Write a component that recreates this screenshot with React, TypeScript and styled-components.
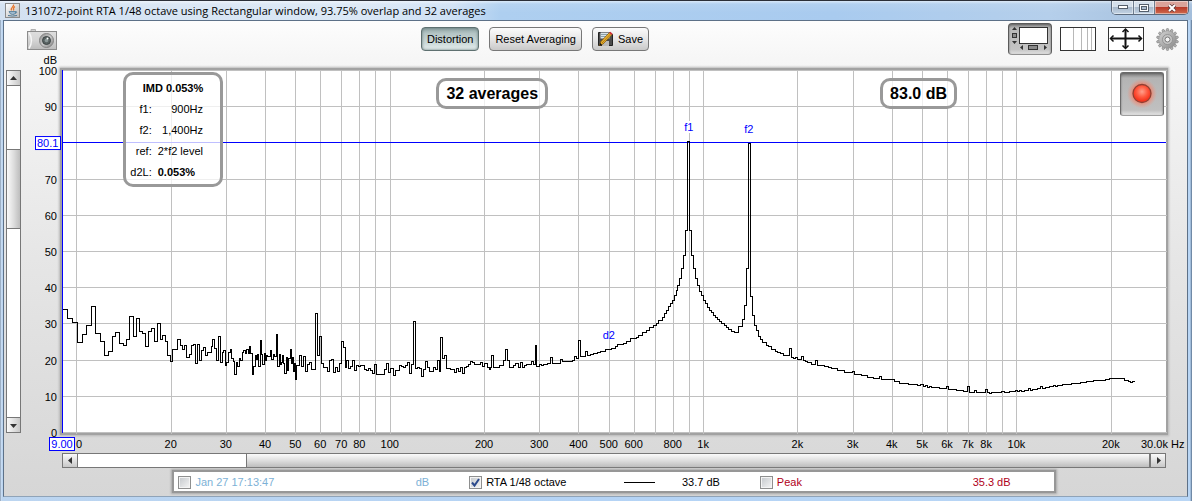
import React from "react";
import styled, { createGlobalStyle, css } from "styled-components";

const GlobalStyle = createGlobalStyle`
  *, *::before, *::after { box-sizing: border-box; }
  body { margin: 0; background: #bcd3ec; }
  button { font: inherit; color: inherit; padding: 0; margin: 0; cursor: pointer; }
`;

const uiFont = `"Liberation Sans", Arial, sans-serif`;

/* ---------- data ---------- */

const F_MIN = 9;
const F_MAX = 30000;
const xPct = (f: number) => `${(Math.log10(f / F_MIN) / Math.log10(F_MAX / F_MIN)) * 100}%`;
const yPct = (db: number) => `${((100 - db) / 100) * (362 / 363) * 100}%`;

const gridFrequencies = [
  10, 20, 30, 40, 50, 60, 70, 80, 90, 100, 200, 300, 400, 500, 600, 700, 800, 900,
  1000, 2000, 3000, 4000, 5000, 6000, 7000, 8000, 9000, 10000, 20000,
];
const unlabelled = new Set([10, 90, 700, 900, 9000]);
const levels = [100, 90, 80, 70, 60, 50, 40, 30, 20, 10, 0];
const formatHz = (f: number) => (f >= 1000 ? `${f / 1000}k` : `${f}`);

/* Spectrum steps: "start,level" pairs; each level holds until the next start. */
const spectrum = `
63,309 67,318 72,322 77,342 82,334 86,325 91,306 95,333 100,341 104,355 108,351 112,336 115,332
119,343 123,345 126,339 129,316 133,336 136,318 139,331 142,333 145,346 148,331 151,328 154,341
157,323 160,339 162,335 165,341 167,355 170,361 172,349 177,339 180,345 182,349 184,345 186,357
189,354 191,345 193,344 195,363 197,344 199,360 201,350 203,347 205,355 207,352 211,346 212,339
214,348 216,360 218,336 220,362 222,352 223,350 225,365 226,362 228,352 230,349 231,358 233,361
234,374 236,362 237,366 239,358 240,360 242,352 243,350 245,353 246,349 248,353 249,346 250,353
252,374 253,366 255,355 256,359 257,354 258,366 260,340 261,354 262,364 264,353 265,360 266,355
267,356 270,350 271,359 273,354 274,356 276,334 277,366 279,354 280,364 281,362 282,355 283,363
284,373 286,357 287,370 288,358 290,349 291,363 292,357 293,371 294,363 295,379 296,365 299,355
301,366 303,356 305,371 307,364 309,362 311,369 315,313 317,355 319,336 321,363 323,367 327,371
329,360 331,359 333,372 335,367 337,371 339,363 341,341 343,347 345,367 346,360 348,368 350,366
352,360 354,370 356,365 358,366 360,365 364,369 366,370 368,368 370,370 372,373 374,364 376,374
384,369 386,363 388,372 390,368 393,375 395,370 399,365 401,366 403,367 405,365 407,362 409,373
411,364 413,321 415,368 417,367 419,368 421,376 423,369 425,361 427,367 429,371 433,367 435,369
437,360 439,371 440,337 442,358 444,355 446,368 450,369 454,372 456,368 458,371 460,367 462,373
464,367 466,366 468,364 470,361 472,362 474,364 480,362 482,366 484,363 487,367 489,369 490,367
491,355 493,367 499,365 503,360 505,349 507,360 509,367 513,365 515,363 518,367 520,362 522,367
524,365 526,364 531,361 533,364 535,345 536,366 539,364 541,365 543,364 547,363 550,357 552,363
560,359 562,361 572,360 574,356 576,358 578,340 580,356 585,351 587,355 590,354 593,353 597,352
600,351 605,349 611,348 615,346 617,344 623,343 626,341 630,338 636,337 638,335 642,332 646,330
649,327 653,325 656,323 658,320 662,317 664,313 666,310 668,306 670,303 672,300 674,295 676,290
677,285 679,278 681,268 683,255 685,230 687,141 689,230 691,255 693,268 695,278 697,285 699,291
701,295 703,300 705,303 707,307 709,310 711,312 713,315 715,317 717,319 719,321 721,323 724,325
726,327 728,329 731,331 734,332 738,326 742,319 744,305 746,268 748,143 750,296 752,315 754,325
756,330 758,336 760,339 762,342 766,345 768,346 771,349 775,351 777,352 780,353 783,355 789,348
791,357 793,358 795,357 797,359 801,356 803,360 805,361 807,362 811,364 815,360 817,365 824,366
828,367 831,368 837,370 844,372 852,371 854,374 861,375 867,377 873,378 879,376 881,379 890,379
892,379 894,381 899,383 908,384 917,385 920,384 923,386 925,385 927,387 929,386 931,387 939,388
946,386 948,389 956,390 963,391 967,386 969,392 974,390 976,392 985,389 987,392 989,393 991,392
1001,391 1004,392 1009,391 1015,390 1017,391 1019,390 1021,391 1024,390 1028,388 1030,390
1032,389 1037,388 1040,386 1042,388 1045,387 1049,386 1053,385 1055,386 1057,385 1062,384 1071,383
1080,382 1086,381 1093,380 1105,379 1109,378 1112,378 1124,380 1128,381 1130,382 1132,381`;

const steps = spectrum.trim().split(/\s+/).map((p) => p.split(",").map(Number));
const tracePath =
  steps.map(([x, y], i) => (i === 0 ? `M${x} ${y + 0.5}` : `H${x + 0.5}V${y + 0.5}`)).join("") + "H1135";

/* ---------- window ---------- */

const Window = styled.div`
  min-height: 100vh;
  display: flex;
  flex-direction: column;
  padding: 0 4px 4px 3px;
  background: linear-gradient(90deg, #6f8299 0, #cfe0f3 1px, #bcd5f0 2px, #b4d3f5 50%, #b9d6f5 calc(100% - 2px), #58708c 100%);
  font: 11px/13px ${uiFont};
  color: #000;
`;

const TitleBar = styled.header`
  height: 20px;
  margin: 0 -4px 0 -3px;
  padding-left: 5px;
  display: flex;
  align-items: center;
  gap: 5px;
  border-top: 1px solid #2b2f38;
  background:
    linear-gradient(180deg, rgba(255, 255, 255, 0.55) 0, rgba(255, 255, 255, 0.1) 3px, transparent 60%),
    linear-gradient(90deg, #d3e1f1 0, #dbe8f6 30%, #cfe1f5 38%, #aecff0 42%, #a9cbef 70%, #b5cfeb 88%, #a4bedb 100%);
`;

const Title = styled.h1`
  margin: 0;
  flex: 1;
  font: 11px/18px "Open Sans", "Noto Sans", sans-serif;
  white-space: nowrap;
`;

const WindowButtons = styled.div`
  align-self: flex-start;
  display: flex;
  height: 14px;
  margin-right: 3px;
  border: 1px solid #5c6a7c;
  border-top: 0;
  border-radius: 0 0 5px 5px;
  overflow: hidden;
`;

const WindowButton = styled.button<{ $close?: boolean }>`
  display: grid;
  place-items: center;
  width: ${(p) => (p.$close ? 34 : 21)}px;
  border: 0;
  border-left: ${(p) => (p.$close ? "1px solid #5c6a7c" : "0")};
  box-shadow: inset 0 0 0 1px rgba(255, 255, 255, 0.45);
  background: ${(p) =>
    p.$close
      ? "linear-gradient(#dba39a 0 45%, #b93b2a 50%, #cf6a4d)"
      : "linear-gradient(#d5e0ec 0 45%, #a9bacd 50%, #c3d3e4)"};
  & + & { border-left: 1px solid #6d7c8f; }
`;

const Client = styled.main`
  flex: 1;
  display: flex;
  flex-direction: column;
  border: 1px solid #5d7188;
  border-bottom-color: #8fa3b8;
  background: linear-gradient(#fdfdfd 0, #f6f6f6 8%, #e6e6e6 50%, #d6d6d6 100%);
`;

/* ---------- toolbar ---------- */

const Toolbar = styled.div`
  height: 36px;
  padding: 0 8px 0 23px;
  display: grid;
  grid-template-columns: 1fr auto 1fr;
  align-items: center;
`;

const ButtonRow = styled.div`
  display: flex;
  gap: 10px;
  margin-right: 136px;
`;

const ToolButton = styled.button<{ $pressed?: boolean }>`
  height: 24px;
  padding: 0 5px;
  display: flex;
  align-items: center;
  gap: 5px;
  border: 1px solid #777;
  border-radius: 4px;
  line-height: 15px;
  white-space: nowrap;
  background: linear-gradient(#fbfbfb, #e6e6e6 50%, #c9c9c9);
  ${(p) =>
    p.$pressed &&
    css`
      border-color: #5e7070;
      background: linear-gradient(#8fa3a3, #b4c5c5 25%, #ccdada 70%, #e6eeee);
      box-shadow: inset 0 0 3px #5f7474;
    `}
`;

const PlainButton = styled.button`
  display: block;
  justify-self: start;
  border: 0;
  background: none;
  line-height: 0;
`;

const ViewTools = styled.div`
  display: flex;
  align-items: center;
  justify-content: flex-end;
  gap: 12px;
`;

const LayoutToggle = styled.button`
  width: 44px;
  height: 32px;
  margin-right: -4px;
  border: 1px solid #5a5a5a;
  border-bottom-color: #909090;
  border-radius: 4px;
  line-height: 0;
  background: linear-gradient(#8c8c8c, #b8b8b8 15%, #c4c4c4 85%, #e0e0e0);
  box-shadow: inset 0 1px 2px #666;
`;

/* ---------- chart area ---------- */

const ChartGrid = styled.section`
  flex: 1;
  display: grid;
  grid-template-columns: 15px 41px minmax(0, 1fr) 21px;
  grid-template-rows: 13px minmax(200px, 1fr) 20px 15px;
  padding-left: 2px;
`;

const AxisUnit = styled.div`
  grid-area: 1 / 2;
  padding-right: 5px;
  margin-top: -3px;
  text-align: right;
`;

const AxisSvg = styled.svg<{ $area: string }>`
  grid-area: ${(p) => p.$area};
  display: block;
  width: 100%;
  height: 100%;
  overflow: visible;
  z-index: 1;
  font: 11px ${uiFont};
`;

const Plot = styled.div`
  grid-area: 2 / 3;
  position: relative;
  background: #fff;
  box-shadow: 0 0 0 2px #a2a2a2, 0 0 2px 3px #b8b8b8;
`;

const PlotSvg = styled.svg`
  position: absolute;
  inset: 0;
  width: 100%;
  height: 100%;
  overflow: visible;
  font: 11px ${uiFont};
`;

const overlay = css`
  position: absolute;
  border: 3px solid #999;
  border-radius: 10px;
  background: rgba(255, 255, 255, 0.75);
`;

const Readout = styled.output<{ $left: string; $width: number }>`
  ${overlay}
  top: 8px;
  left: ${(p) => p.$left};
  width: ${(p) => p.$width}px;
  height: 31px;
  text-align: center;
  font: bold 16px/26px ${uiFont};
  white-space: nowrap;
`;

const DistortionPanel = styled.div`
  ${overlay}
  top: 2px;
  left: 61px;
  width: 100px;
  height: 115px;
  padding: 3px 0;
`;

const DistortionTable = styled.table`
  width: 100%;
  border-collapse: collapse;
  caption { font-weight: bold; line-height: 21px; }
  th { width: 26px; padding: 0; font-weight: normal; text-align: right; }
  td { padding: 0 17px 0 6px; text-align: right; white-space: nowrap; }
  tr { height: 21px; }
  tr:last-child td { text-align: left; font-weight: bold; padding-right: 0; }
`;

const RecordButton = styled.button`
  position: absolute;
  top: 2px;
  right: 2px;
  width: 44px;
  height: 44px;
  border: 1px solid #6a6a6a;
  border-bottom-color: #a0a0a0;
  border-radius: 3px;
  line-height: 0;
  background: linear-gradient(#7c7c7c, #b4b4b4 12%, #c0c0c0 88%, #e4e4e4);
  box-shadow: inset 0 1px 2px #666;
`;

const ScrollTrack = styled.div<{ $vertical?: boolean }>`
  grid-area: ${(p) => (p.$vertical ? "2 / 1" : "4 / 3")};
  display: flex;
  flex-direction: ${(p) => (p.$vertical ? "column" : "row")};
  border: 1px solid #777;
  background: #fff;
`;

const ScrollArrow = styled.button<{ $side: "top" | "right" | "bottom" | "left" }>`
  flex: 0 0 15px;
  display: grid;
  place-items: center;
  border: 0 solid #777;
  border-${(p) => p.$side}-width: 1px;
  background: linear-gradient(${(p) => (p.$side === "left" || p.$side === "right" ? "180deg" : "90deg")}, #fafafa, #c8c8c8);
`;

const ScrollGap = styled.div<{ $grow: number }>`
  flex: ${(p) => p.$grow} 1 0;
`;

const ScrollThumb = styled.div<{ $grow: number; $vertical?: boolean }>`
  flex: ${(p) => p.$grow} 1 0;
  border: 0 solid #777;
  border-width: ${(p) => (p.$vertical ? "1px 0" : "0 1px")};
  background: linear-gradient(${(p) => (p.$vertical ? "90deg" : "180deg")}, #fafafa, #dedede 50%, #bdbdbd);
`;

/* ---------- legend ---------- */

const LegendBar = styled.div`
  display: flex;
  justify-content: center;
  padding: 2px 21px 3px 58px;
`;

const Legend = styled.div`
  width: 80%;
  height: 23px;
  padding: 1px 3px 0 4px;
  display: grid;
  grid-template-columns: repeat(3, 1fr);
  align-items: center;
  border: 2px solid #979797;
  box-shadow: 0 0 2px 1px #a8a8a8;
  background: #fff;
`;

const LegendItem = styled.div<{ $color: string }>`
  display: flex;
  align-items: center;
  padding-right: 40px;
  color: ${(p) => p.$color};
`;

const LegendLabel = styled.label`
  flex: 1;
  display: flex;
  align-items: center;
  gap: 4px;
  white-space: nowrap;
`;

const CheckWrap = styled.span`
  position: relative;
  display: block;
  width: 13px;
  height: 13px;
`;

const Check = styled.input`
  appearance: none;
  display: block;
  width: 13px;
  height: 13px;
  margin: 0;
  border: 1px solid #8e8f8f;
  background: linear-gradient(135deg, #c3c7cb, #f6f6f6);
  box-shadow: inset 0 0 0 1px #f4f4f4;
`;

const CheckMark = styled.svg`
  position: absolute;
  inset: 0;
  pointer-events: none;
`;

const Swatch = styled.span`
  width: 31px;
  height: 1px;
  margin-right: 27px;
  background: #000;
`;

/* ---------- icons ---------- */

const JavaIcon = () => (
  <svg width="15" height="15" viewBox="0 0 15 15" aria-hidden="true">
    <defs>
      <linearGradient id="java" x1="0" y1="0" x2="1" y2="1">
        <stop offset="0" stopColor="#fff" />
        <stop offset="1" stopColor="#b9b9b9" />
      </linearGradient>
    </defs>
    <rect x=".5" y=".5" width="14" height="14" fill="url(#java)" stroke="#8b8b8b" />
    <path d="M8.5 1.5C9.500 3.500 5 4.500 6.500 7.500M10 3.500C8 4.500 8 5.500 8.700 7.500" fill="none" stroke="#e8762c" strokeWidth="1.300" />
    <path d="M4 8.500h6.500v1.500q-.5 1.500-3 1.500T4 8.500M10.500 8.500q2.500 0 0 2.200" fill="#9fb9cd" stroke="#4d7896" strokeWidth=".8" />
    <path d="M3 12.500q4.500 1.200 9 0" fill="none" stroke="#4d7896" />
  </svg>
);

const CameraIcon = () => (
  <svg width="30" height="21" viewBox="0 0 30 21" aria-hidden="true">
    <defs>
      <linearGradient id="cam" x1="0" y1="0" x2="0" y2="1">
        <stop offset="0" stopColor="#dedede" />
        <stop offset=".5" stopColor="#d4d4d4" />
        <stop offset="1" stopColor="#bcbcbc" />
      </linearGradient>
      <linearGradient id="ring" x1="0" y1="0" x2="1" y2="1">
        <stop offset="0" stopColor="#8c8c8c" />
        <stop offset=".5" stopColor="#c9c9c9" />
        <stop offset="1" stopColor="#7f7f7f" />
      </linearGradient>
    </defs>
    <path d="M4 2.500v-2h4.500v2" fill="#d0d0d0" stroke="#b0b0b0" />
    <rect x=".5" y="2.500" width="29" height="18" fill="url(#cam)" stroke="#8c8c8c" />
    <path d="M2 3.500q5 8 0 16" fill="none" stroke="#f6f6f6" strokeWidth="1.500" />
    <circle cx="19.500" cy="11.500" r="7" fill="url(#ring)" stroke="#858585" />
    <circle cx="19.500" cy="11.500" r="4" fill="#5a6464" stroke="#3d4545" />
    <circle cx="19.500" cy="11.500" r="1.800" fill="#8d9999" />
    <circle cx="20.500" cy="9.500" r="1" fill="#fff" />
  </svg>
);

const SaveIcon = () => (
  <svg width="15" height="16" viewBox="0 0 15 16" aria-hidden="true">
    <path d="M.5 1.500h12l2 2v11H.5z" fill="#4b4b4b" stroke="#222" />
    <rect x="2.500" y="1.500" width="9" height="6" fill="#d9e4ea" />
    <path d="M3 3.500h8M3 5.500h8" stroke="#8aa0aa" />
    <rect x="4" y="10" width="7" height="5" fill="#b9b9b9" />
    <path d="M1.500 14.500 3 10.500 11.500 1.500 14 3.500 5 13z" fill="#f2b92d" stroke="#7c5310" strokeWidth=".8" />
    <path d="M4 12 12.500 3" stroke="#9b6a15" strokeWidth=".8" />
    <path d="M11 2 12.300.7 14.700 2.700 13.500 4z" fill="#d3343c" />
    <path d="M1.500 14.500 2.500 12 4 13.500z" fill="#111" />
  </svg>
);

const LayoutIcon = () => (
  <svg width="42" height="30" viewBox="0 0 42 30" aria-hidden="true">
    <rect x="10.500" y="3.500" width="28" height="16" fill="#fff" stroke="#333" />
    <path d="M3 6l2.500-3L8 6zM3 17h5l-2.500 3zM14 21v5l-3-2.500zM35 21v5l3-2.500z" fill="#333" />
    <rect x="3.500" y="9.500" width="4" height="4" fill="#8a8a8a" stroke="#333" />
    <rect x="19.500" y="21.500" width="9" height="4" fill="#8a8a8a" stroke="#333" />
  </svg>
);

const GridIcon = () => (
  <svg width="36" height="24" viewBox="0 0 36 24" aria-hidden="true">
    <rect x=".5" y=".5" width="35" height="23" fill="#fff" stroke="#333" />
    <path d="M13.500 1v22M21.500 1v22M27.500 1v22M31.500 1v22" stroke="#b8b8b8" />
  </svg>
);

const FitIcon = () => (
  <svg width="36" height="24" viewBox="0 0 36 24" aria-hidden="true">
    <rect x=".5" y=".5" width="35" height="23" fill="#fff" stroke="#333" />
    <path d="M3 11.500h30M17.500 3v18" stroke="#111" strokeWidth="2" />
    <path d="M5.500 8.500 2.500 11.500l3 3M30.500 8.500l3 3-3 3M14.500 5 17.500 2l3 3M14.500 18.500l3 3 3-3" fill="none" stroke="#111" strokeWidth="1.500" />
  </svg>
);

const GearIcon = () => (
  <svg width="23" height="23" viewBox="-11.500 -11.500 23 23" aria-hidden="true">
    <defs>
      <linearGradient id="gear" x1="0" y1="0" x2="1" y2="1">
        <stop offset="0" stopColor="#d2d2d2" />
        <stop offset="1" stopColor="#8a8a8a" />
      </linearGradient>
    </defs>
    {Array.from({ length: 14 }, (_, i) => (
      <rect key={i} x="-1.200" y="-11" width="2.400" height="5" rx="1" fill="#b4b4b4" stroke="#7c7c7c" strokeWidth=".6" transform={`rotate(${(i * 360) / 14})`} />
    ))}
    <circle r="8.800" fill="url(#gear)" stroke="#909090" strokeWidth=".6" />
    <circle r="5" fill="#c6c6c6" stroke="#8c8c8c" strokeWidth=".8" />
    <circle r="2.500" fill="#f4f4f4" stroke="#777" />
  </svg>
);

const RecordIcon = () => (
  <svg width="42" height="42" viewBox="0 0 42 42" aria-hidden="true">
    <defs>
      <radialGradient id="glow">
        <stop offset=".5" stopColor="#ff6a4a" stopOpacity=".8" />
        <stop offset="1" stopColor="#ff8a70" stopOpacity="0" />
      </radialGradient>
      <radialGradient id="led" cx=".5" cy=".4">
        <stop offset="0" stopColor="#ffa08c" />
        <stop offset=".6" stopColor="#ff5a40" />
        <stop offset="1" stopColor="#f5361e" />
      </radialGradient>
    </defs>
    <circle cx="21" cy="20.500" r="15" fill="url(#glow)" />
    <circle cx="21" cy="20.500" r="9" fill="url(#led)" stroke="#8f4034" strokeWidth="1.300" />
  </svg>
);

const arrows = {
  top: "M0 5 3.500 1 7 5z",
  bottom: "M0 2h7L3.500 6z",
  left: "M5 0v7L1 3.500z",
  right: "M2 0v7l4-3.500z",
};
const Arrow = ({ to }: { to: keyof typeof arrows }) => (
  <svg width="7" height="7" viewBox="0 0 7 7" aria-hidden="true">
    <path d={arrows[to]} fill="#333" />
  </svg>
);

/* ---------- pieces ---------- */

const LevelAxis = () => (
  <AxisSvg $area="2 / 2">
    {levels.filter((db) => db !== 80).map((db) => (
      <text key={db} x="100%" dx="-5" y={yPct(db)} dy="5" textAnchor="end">{db}</text>
    ))}
    <svg x="0" y={yPct(80.1)} overflow="visible">
      <rect x="14.500" y="-5.500" width="25" height="13" fill="#fff" stroke="#00f" />
      <text x="15" dx="1" y="5" fill="#00f">80.1</text>
    </svg>
  </AxisSvg>
);

/* The start-of-range box covers the first digit of the 10 Hz label, so only its zero is drawn. */
const FrequencyAxis = () => (
  <AxisSvg $area="3 / 3">
    {gridFrequencies.filter((f) => !unlabelled.has(f)).map((f) => (
      <text key={f} x={xPct(f)} y="15" textAnchor="middle">{formatHz(f)}</text>
    ))}
    <text x="14" y="15">0</text>
    <text x="100%" dx="-25" y="15">30.0k Hz</text>
    <rect x="-12.500" y="4.500" width="25" height="13" fill="#fff" stroke="#00f" />
    <text x="0" y="15" textAnchor="middle" fill="#00f">9.00</text>
  </AxisSvg>
);

const PlotDrawing = () => (
  <PlotSvg role="img" aria-label="Spectrum">
    <g stroke="#c0c0c0" shapeRendering="crispEdges" transform="translate(0.5 0.5)">
      {gridFrequencies.map((f) => (
        <line key={f} x1={xPct(f)} x2={xPct(f)} y1="0" y2="100%" />
      ))}
      {levels.map((db) => (
        <line key={db} x1="0" x2="100%" y1={yPct(db)} y2={yPct(db)} />
      ))}
    </g>
    <svg viewBox="62 70 1104 363" preserveAspectRatio="none" width="100%" height="100%">
      <path d="M62 142.500H1166" stroke="#00f" vectorEffect="non-scaling-stroke" shapeRendering="crispEdges" />
      <path d={tracePath} fill="none" stroke="#000" vectorEffect="non-scaling-stroke" shapeRendering="crispEdges" />
    </svg>
    <rect x="0" y="0" width="1" height="100%" fill="#00f" />
    <svg x={xPct(900)} y="51" overflow="visible">
      <rect x="-5" y="0" width="11" height="12" fill="#fff" />
    </svg>
    <g fill="#00f" textAnchor="middle">
      <text x={xPct(900)} y="61">f1</text>
      <text x={xPct(1400)} y="63">f2</text>
      <text x={xPct(500)} y="269">d2</text>
    </g>
  </PlotSvg>
);

type LegendEntryProps = { id: string; name: string; value: string; color: string; checked?: boolean; swatch?: boolean };

const LegendEntry = ({ id, name, value, color, checked, swatch }: LegendEntryProps) => (
  <LegendItem $color={color}>
    <LegendLabel htmlFor={id}>
      <CheckWrap>
        <Check type="checkbox" id={id} defaultChecked={checked} />
        {checked && (
          <CheckMark width="13" height="13" viewBox="0 0 13 13" aria-hidden="true">
            <path d="M3 6.500 5.500 9.500 10 3" fill="none" stroke="#2c4a8c" strokeWidth="2" />
          </CheckMark>
        )}
      </CheckWrap>
      {name}
    </LegendLabel>
    {swatch && <Swatch />}
    <span>{value}</span>
  </LegendItem>
);

export default function App() {
  return (
    <Window>
      <GlobalStyle />
      <TitleBar>
        <JavaIcon />
        <Title>131072-point RTA 1/48 octave using Rectangular window, 93.75% overlap and 32 averages</Title>
        <WindowButtons>
          <WindowButton aria-label="Minimize">
            <svg width="10" height="5" viewBox="0 0 10 5"><rect x=".5" y=".5" width="9" height="3" fill="#fff" stroke="#555f6c" /></svg>
          </WindowButton>
          <WindowButton aria-label="Maximize">
            <svg width="10" height="8" viewBox="0 0 10 8"><rect x="1.500" y="1.500" width="7" height="5" fill="none" stroke="#555f6c" strokeWidth="3" /><rect x="1.500" y="1.500" width="7" height="5" fill="none" stroke="#fff" /></svg>
          </WindowButton>
          <WindowButton aria-label="Close" $close>
            <svg width="10" height="8" viewBox="0 0 10 8"><path d="M2 1l6 6M8 1 2 7" stroke="#5d3a3a" strokeWidth="3.500" /><path d="M2 1l6 6M8 1 2 7" stroke="#fff" strokeWidth="2" /></svg>
          </WindowButton>
        </WindowButtons>
      </TitleBar>
      <Client>
        <Toolbar>
          <PlainButton aria-label="Capture image"><CameraIcon /></PlainButton>
          <ButtonRow>
            <ToolButton $pressed>Distortion</ToolButton>
            <ToolButton>Reset Averaging</ToolButton>
            <ToolButton><SaveIcon />Save</ToolButton>
          </ButtonRow>
          <ViewTools>
            <LayoutToggle aria-label="Scrollbars"><LayoutIcon /></LayoutToggle>
            <PlainButton aria-label="Frequency axis"><GridIcon /></PlainButton>
            <PlainButton aria-label="Graph limits"><FitIcon /></PlainButton>
            <PlainButton aria-label="Controls"><GearIcon /></PlainButton>
          </ViewTools>
        </Toolbar>
        <ChartGrid>
          <AxisUnit>dB</AxisUnit>
          <ScrollTrack $vertical>
            <ScrollArrow $side="bottom" aria-label="Scroll up"><Arrow to="top" /></ScrollArrow>
            <ScrollGap $grow={63} />
            <ScrollThumb $grow={78} $vertical />
            <ScrollGap $grow={189} />
            <ScrollArrow $side="top" aria-label="Scroll down"><Arrow to="bottom" /></ScrollArrow>
          </ScrollTrack>
          <LevelAxis />
          <Plot>
            <PlotDrawing />
            <DistortionPanel>
              <DistortionTable>
                <caption>IMD 0.053%</caption>
                <tbody>
                  <tr><th scope="row">f1:</th><td>900Hz</td></tr>
                  <tr><th scope="row">f2:</th><td>1,400Hz</td></tr>
                  <tr><th scope="row">ref:</th><td>2*f2 level</td></tr>
                  <tr><th scope="row">d2L:</th><td>0.053%</td></tr>
                </tbody>
              </DistortionTable>
            </DistortionPanel>
            <Readout $left="33.9%" $width={112}>32 averages</Readout>
            <Readout $left="74.1%" $width={77}>83.0 dB</Readout>
            <RecordButton aria-label="Record"><RecordIcon /></RecordButton>
          </Plot>
          <FrequencyAxis />
          <ScrollTrack>
            <ScrollArrow $side="right" aria-label="Scroll left"><Arrow to="left" /></ScrollArrow>
            <ScrollGap $grow={168} />
            <ScrollThumb $grow={904} />
            <ScrollArrow $side="left" aria-label="Scroll right"><Arrow to="right" /></ScrollArrow>
          </ScrollTrack>
        </ChartGrid>
        <LegendBar>
          <Legend>
            <LegendEntry id="stored" name="Jan 27 17:13:47" value="dB" color="#7db1d6" />
            <LegendEntry id="rta" name="RTA 1/48 octave" value="33.7 dB" color="#000" checked swatch />
            <LegendEntry id="peak" name="Peak" value="35.3 dB" color="#b00020" />
          </Legend>
        </LegendBar>
      </Client>
    </Window>
  );
}
